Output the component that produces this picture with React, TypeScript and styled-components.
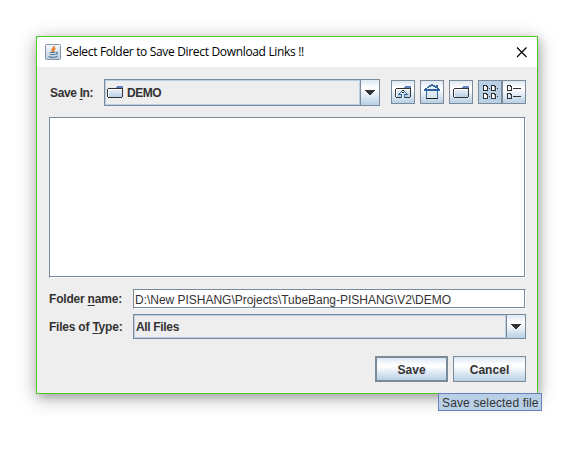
import React from "react";
import styled, { createGlobalStyle, css } from "styled-components";

const LINE = "#7a8a99";
const SELECT = "#b8cfe5";

const Global = createGlobalStyle`
  * { box-sizing: border-box; }
  body { margin: 0; background: #fff; overflow: hidden; }
  svg { display: block; flex: none; }
`;

const metal = css`
  background: linear-gradient(#dde8f3 0%, #ffffff 32%, #ffffff 38%, #b8cfe5 100%);
`;

const Stage = styled.div`
  width: 572px;
  height: 456px;
  padding: 36px;
  font: bold 12px/14px "Liberation Sans", Arial, sans-serif;
  color: #333;
`;

const Dialog = styled.section`
  position: relative;
  width: 502px;
  height: 358px;
  background: #eee;
  border: 1px solid #4bcb22;
  box-shadow: 0 4px 18px rgba(0, 0, 0, 0.3), 2px 3px 8px rgba(0, 0, 0, 0.17);
`;

const TitleBar = styled.header`
  display: flex;
  align-items: center;
  height: 30px;
  padding: 0 10px 0 8px;
  background: #fff;
`;

const Title = styled.h1<{ $spacing: number }>`
  flex: 1;
  margin: 0 0 0 5px;
  font: 12px/16px "Open Sans", sans-serif;
  letter-spacing: ${(p) => p.$spacing}px;
  color: #000;
  white-space: nowrap;
`;

const Content = styled.div`
  padding: 12px 11px 0 12px;
`;

const Row = styled.div<{ $height: number; $gap?: number }>`
  display: flex;
  align-items: center;
  height: ${(p) => p.$height}px;
  margin-top: ${(p) => p.$gap ?? 0}px;
`;

const Label = styled.label<{ $width: number; $indent?: number; $spacing?: number }>`
  width: ${(p) => p.$width}px;
  padding-left: ${(p) => p.$indent ?? 0}px;
  letter-spacing: ${(p) => p.$spacing ?? 0}px;
  white-space: nowrap;
  flex: none;
  u { text-underline-offset: 2px; text-decoration-thickness: 1px; text-decoration-skip-ink: none; }
`;

const Combo = styled.div<{ $width: number }>`
  display: flex;
  width: ${(p) => p.$width}px;
  height: 100%;
  border: 1px solid ${LINE};
  flex: none;
`;

const ComboValue = styled.div<{ $spacing?: number }>`
  flex: 1;
  display: flex;
  align-items: center;
  gap: 4px;
  padding-left: 1px;
  border: 1px solid ${SELECT};
  letter-spacing: ${(p) => p.$spacing ?? 0}px;
`;

const ComboArrow = styled.button`
  ${metal}
  display: flex;
  align-items: center;
  justify-content: center;
  width: 19px;
  padding: 0;
  border: 0;
  border-left: 1px solid ${LINE};
`;

const Toolbar = styled.div`
  display: flex;
  gap: 5px;
  margin: 0 0 1px 11px;
`;

const ToggleGroup = styled.div`
  display: flex;
`;

const ToolButton = styled.button<{ $pressed?: boolean }>`
  ${metal}
  ${(p) => p.$pressed && `background: ${SELECT};`}
  width: 24px;
  height: 24px;
  padding: 0;
  border: 1px solid ${LINE};
`;

const FileList = styled.div`
  width: 477px;
  height: 161px;
  margin-top: 11px;
  background: #fff;
  border: 1px solid ${LINE};
  border-right-color: #fff;
  border-bottom-color: #fff;
  box-shadow: inset -1px -1px ${LINE};
`;

const PathField = styled.input`
  width: 393px;
  height: 20px;
  padding: 1px 1px 0;
  border: 1px solid ${LINE};
  border-right-color: #fff;
  border-bottom-color: #fff;
  border-radius: 0;
  box-shadow: inset -1px -1px ${LINE};
  outline: 0;
  font: 12px/14px "Liberation Sans", Arial, sans-serif;
  letter-spacing: -0.02px;
  color: #333;
`;

const Actions = styled.footer`
  display: flex;
  justify-content: flex-end;
  gap: 5px;
  margin-top: 17px;
`;

const ActionButton = styled.button<{ $primary?: boolean }>`
  ${metal}
  width: 73px;
  height: 26px;
  padding: 1px 0 0;
  border: ${(p) => (p.$primary ? 2 : 1)}px solid ${LINE};
  font: inherit;
  letter-spacing: 0.05px;
  color: #333;
`;

const Tooltip = styled.div`
  position: absolute;
  left: 401px;
  top: 356px;
  width: 104px;
  height: 18px;
  padding: 2px 0 0 3px;
  background: ${SELECT};
  border: 1px solid #6382bf;
  font-weight: normal;
  letter-spacing: 0.14px;
  white-space: nowrap;
`;

const JavaIcon = () => (
  <svg width="16" height="16" viewBox="0 0 16 16">
    <defs>
      <linearGradient id="java" x2="0" y2="1">
        <stop stopColor="#fafcfe" />
        <stop offset="1" stopColor="#b9cbdc" />
      </linearGradient>
    </defs>
    <rect x=".5" y=".5" width="15" height="15" rx="1" fill="url(#java)" stroke="#8494a5" />
    <path d="M9.500 2C9.500 4 5.500 4.500 7.500 8M10.500 4.500C8 5.500 8.500 6 9 8" fill="none" stroke="#e87722" strokeWidth="1.4" />
    <path d="M4.500 8.500h6M5 10.500h5M11 8.500c2-.5 2 1.500-.5 2M3.500 12.500c2 1.200 7 1 9 0" fill="none" stroke="#527d9f" strokeWidth="1.1" />
  </svg>
);

const CloseIcon = () => (
  <svg width="11" height="11" viewBox="0 0 11 11">
    <path d="M1 .5l9.500 9.500M10.500 .5l-9.500 9.500" stroke="#000" strokeWidth="1.15" />
  </svg>
);

const ArrowIcon = () => (
  <svg width="10" height="5" shapeRendering="crispEdges">
    <path d="M0 0h10v1h-1v1h-1v1h-1v1h-1v1h-2v-1h-1v-1h-1v-1h-1v-1h-1z" fill="#333" />
  </svg>
);

const FolderShape = () => (
  <>
    <defs>
      <linearGradient id="folder" x2="0" y2="1">
        <stop stopColor="#f4f8fc" />
        <stop offset="1" stopColor="#b8cfe5" />
      </linearGradient>
    </defs>
    <path d="M1 3h14v9H1z" fill="url(#folder)" />
    <path d="M10 1h6v1h-6zM9 2h7v1H9z" fill="#6382bf" />
    <path d="M1 3h8v1H1zM0 4h1v8H0zM9 3h6v1H9zM15 3h1v9h-1zM1 12h14v1H1z" fill="#333" />
    <path d="M1 4h14v1H1zM1 4h1v8H1z" fill="#fff" />
  </>
);

const FolderIcon = () => (
  <svg width="16" height="16" shapeRendering="crispEdges">
    <FolderShape />
  </svg>
);

const ToolFolderIcon = ({ up = false }: { up?: boolean }) => (
  <svg width="22" height="22" shapeRendering="crispEdges">
    <g transform="translate(3 4)">
      <FolderShape />
      {up && <path d="M7 6h2v1h1v1h1v1h1v1H9v3H7v-3H4V9h1V8h1V7h1z" fill="#dce8f3" />}
      {up && (
        <path d="M6 6h1v1H6zM9 6h1v1H9zM5 7h1v1H5zM10 7h1v1h-1zM4 8h1v1H4zM11 8h1v1h-1zM3 9h3v1H3zM10 9h3v1h-3zM6 9h1v4H6zM9 9h1v4H9z" fill="#336699" />
      )}
      {up && <path d="M7 5h2v1H7zM7 7h2v1H7z" fill="#222" />}
    </g>
  </svg>
);

const HomeIcon = () => (
  <svg width="22" height="22" shapeRendering="crispEdges">
    <path d="M6 9h11v8H6z" fill="#dce8f3" />
    <path d="M10 3h2v1h2v1h2v1h1v1h1v1h1v2H3V8h1V7h2V6h1V5h1V4h2z" fill="#336699" />
    <path d="M10 5h2v1h2v1h2v1H6V7h2V6h2z" fill="#e9f1f8" />
    <path d="M15 4h2v3h-2zM5 10h1v7H5zM16 10h1v7h-1z" fill="#336699" />
    <path d="M5 17h12v1H5z" fill="#222" />
  </svg>
);

const docs = (x: number, y: number) =>
  `M${x} ${y}h4v1h1v5h-5zM${x + 1} ${y + 1}v4h3v-3h-1v-1z`;

const ListIcon = () => (
  <svg width="22" height="22" shapeRendering="crispEdges">
    <path d="M5 5h3v4H5zM12 5h3v4h-3zM5 13h3v4H5zM12 13h3v4h-3z" fill="#fff" />
    <path fillRule="evenodd" d={docs(4, 4) + docs(12, 4) + docs(4, 12) + docs(12, 12)} fill="#333" />
    <path d="M10 7h1v1h-1zM18 7h1v1h-1zM10 15h1v1h-1zM18 15h1v1h-1z" fill="#333" />
  </svg>
);

const DetailsIcon = () => (
  <svg width="22" height="22" shapeRendering="crispEdges">
    <path fillRule="evenodd" d={docs(4, 4) + docs(4, 12)} fill="#333" />
    <path d="M10 7h8v1h-8zM10 15h8v1h-8z" fill="#333" />
  </svg>
);

export default function App() {
  return (
    <Stage>
      <Global />
      <Dialog>
        <TitleBar>
          <JavaIcon />
          <Title $spacing={-0.33}>Select Folder to Save Direct Download Links !!</Title>
          <CloseIcon />
        </TitleBar>
        <Content>
          <Row $height={27}>
            <Label $width={55} $indent={1} $spacing={-0.35}>Save <u>I</u>n:</Label>
            <Combo $width={276}>
              <ComboValue $spacing={-0.5}><FolderIcon />DEMO</ComboValue>
              <ComboArrow aria-label="Open folder list"><ArrowIcon /></ComboArrow>
            </Combo>
            <Toolbar>
              <ToolButton aria-label="Up one level"><ToolFolderIcon up /></ToolButton>
              <ToolButton aria-label="Home"><HomeIcon /></ToolButton>
              <ToolButton aria-label="Create new folder"><ToolFolderIcon /></ToolButton>
              <ToggleGroup>
                <ToolButton $pressed aria-label="List"><ListIcon /></ToolButton>
                <ToolButton aria-label="Details"><DetailsIcon /></ToolButton>
              </ToggleGroup>
            </Toolbar>
          </Row>
          <FileList />
          <Row $height={20} $gap={11}>
            <Label $width={84} $spacing={-0.2}>Folder <u>n</u>ame:</Label>
            <PathField readOnly value="D:\New PISHANG\Projects\TubeBang-PISHANG\V2\DEMO" />
          </Row>
          <Row $height={25} $gap={5}>
            <Label $width={84} $spacing={-0.22}>Files of <u>T</u>ype:</Label>
            <Combo $width={393}>
              <ComboValue $spacing={-0.33}>All Files</ComboValue>
              <ComboArrow aria-label="Open file types"><ArrowIcon /></ComboArrow>
            </Combo>
          </Row>
          <Actions>
            <ActionButton $primary>Save</ActionButton>
            <ActionButton>Cancel</ActionButton>
          </Actions>
        </Content>
        <Tooltip role="tooltip">Save selected file</Tooltip>
      </Dialog>
    </Stage>
  );
}
